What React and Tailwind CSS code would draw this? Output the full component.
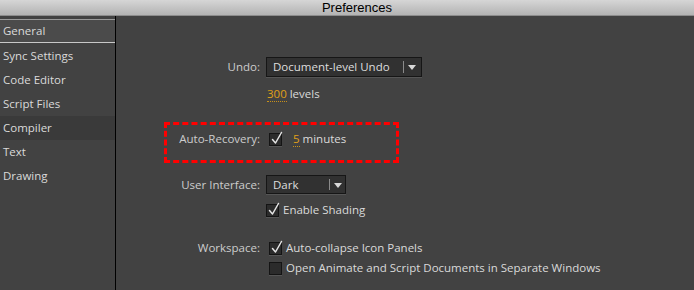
import React from "react";

const Check = ({ checked, className = "" }) => (
  <div className={`relative w-[13px] h-[13px] bg-[#2b2b2b] border border-[#141414] shadow-[0_1px_0_#555] shrink-0 ${className}`}>
    {checked && (
      <svg className="absolute left-[1px] top-[-3px] overflow-visible" width="12" height="14" viewBox="0 0 12 14">
        <path d="M1.5 8.5 L4.5 12 L10.5 1.5" fill="none" stroke="#e4e4e4" strokeWidth="1.5" strokeLinecap="round" strokeLinejoin="round" />
      </svg>
    )}
  </div>
);

const Dropdown = ({ label, width, sep }) => (
  <div
    className="relative flex items-center bg-[#313131] border border-[#161616] shadow-[0_1px_0_#555] text-[#dedede]"
    style={{ width, height: "100%" }}
  >
    <span className="pl-[6px]">{label}</span>
    <div className="absolute top-[3px] bottom-[3px] w-px bg-[#8a8a8a]" style={{ left: sep }} />
    <svg className="absolute" style={{ left: sep + 5, top: "50%", marginTop: -2 }} width="8" height="5" viewBox="0 0 8 5">
      <path d="M0 0 H8 L4 5 Z" fill="#d8d8d8" />
    </svg>
  </div>
);

const Row = ({ label, children, h, mt }) => (
  <div className="flex items-center" style={{ height: h, marginTop: mt }}>
    <div className="w-[150px] text-right pr-[6px] text-[#cdcdcd] shrink-0">{label}</div>
    <div className="flex items-center h-full">{children}</div>
  </div>
);

export default function App() {
  const items = ["General", "Sync Settings", "Code Editor", "Script Files", "Compiler", "Text", "Drawing"];
  return (
    <div className="w-[694px] h-[290px] bg-[#424242] flex flex-col overflow-hidden font-['Open_Sans',sans-serif] text-[11.5px]">
      <div className="h-[16px] shrink-0 bg-gradient-to-b from-[#d6d6d6] to-[#b3b3b3] border-b border-[#8c8c8c] flex items-center justify-center pl-[20px] font-['Liberation_Sans',sans-serif] text-[13px] text-black leading-none">
        Preferences
      </div>
      <div className="flex flex-1">
        <div className="w-[116px] shrink-0 border-r border-black pt-[3px]">
          {items.map((it) => (
            <div
              key={it}
              className={`h-[24px] flex items-center pl-[3px] text-[#dadada] ${
                it === "General"
                  ? "bg-[#4b4b4b] border-t border-b border-[#9a9a9a] border-b-[#c8c8c8] h-[23px] mb-[1px]"
                  : it === "Compiler"
                  ? "bg-[#3a3a3a]"
                  : ""
              }`}
            >
              {it}
            </div>
          ))}
        </div>
        <div className="relative flex-1 pt-[41px]">
          <Row label="Undo:" h={20}>
            <Dropdown label="Document-level Undo" width={156} sep={136} />
          </Row>
          <Row label="" h={16} mt={9}>
            <span className="text-[#dadada] ml-[1px]">
              <span className="text-[#e0a018] border-b border-dotted border-[#c8901a]">300</span> levels
            </span>
          </Row>
          <Row label="Auto-Recovery:" h={16} mt={29}>
            <Check checked className="ml-[3px]" />
            <span className="ml-[11px] text-[#dadada]">
              <span className="text-[#e0a018] border-b border-dotted border-[#c8901a]">5</span> minutes
            </span>
          </Row>
          <Row label="User Interface:" h={19} mt={28}>
            <Dropdown label="Dark" width={80} sep={62} />
          </Row>
          <Row label="" h={16} mt={8}>
            <Check checked />
            <span className="ml-[4px] text-[#dadada]">Enable Shading</span>
          </Row>
          <Row label="Workspace:" h={16} mt={22}>
            <Check checked className="ml-[3px]" />
            <span className="ml-[4px] text-[#dadada]">Auto-collapse Icon Panels</span>
          </Row>
          <Row label="" h={16} mt={4}>
            <Check className="ml-[3px]" />
            <span className="ml-[4px] text-[#dadada]">Open Animate and Script Documents in Separate Windows</span>
          </Row>
          <div className="absolute left-[48px] top-[106px] w-[235px] h-[41px] border-[3px] border-dashed border-[#ff0000]" />
        </div>
      </div>
    </div>
  );
}
